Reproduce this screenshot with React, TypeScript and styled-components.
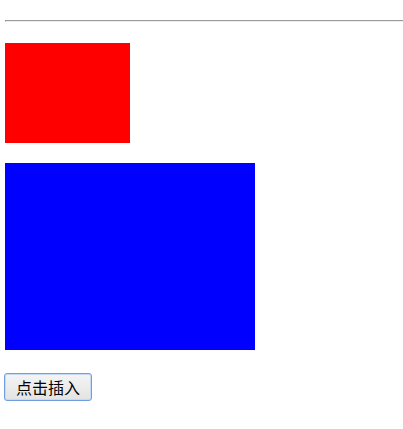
import React from 'react';
import styled, { createGlobalStyle } from 'styled-components';

const GlobalStyle = createGlobalStyle`
  html, body {
    margin: 0;
    padding: 0;
    background: #ffffff;
  }
  body {
    font-family: "Noto Sans CJK SC", "Liberation Sans", sans-serif;
  }
`;

const Page = styled.div`
  display: flex;
  flex-direction: column;
  align-items: flex-start;
  padding: 20px 0 0 5px;
`;

const Rule = styled.hr`
  align-self: stretch;
  margin: 0;
  height: 0;
  border-style: solid;
  border-width: 1px 0 1px 1px;
  border-top-color: #9a9a9a;
  border-left-color: #9a9a9a;
  border-bottom-color: #eeeeee;
`;

const Block = styled.div<{ $w: number; $h: number; $color: string; $top: number }>`
  width: ${({ $w }) => $w}px;
  height: ${({ $h }) => $h}px;
  background: ${({ $color }) => $color};
  margin-top: ${({ $top }) => $top}px;
`;

const InsertButton = styled.button`
  margin: 23px 0 0 -1px;
  height: 28px;
  padding: 0 11px 1px 11px;
  font-family: "Noto Sans CJK SC", "Liberation Sans", sans-serif;
  font-size: 16px;
  line-height: 1;
  color: #000000;
  background: linear-gradient(180deg, #f4f4f4 0%, #ececec 50%, #e3e3e3 100%);
  border: 1px solid #6f9fe0;
  border-radius: 3px;
  box-shadow: inset 0 0 0 1px #c4daf5;
  cursor: pointer;
`;

export default function App() {
  return (
    <>
      <GlobalStyle />
      <Page>
        <Rule />
        <Block $w={125} $h={100} $color="#ff0000" $top={21} />
        <Block $w={250} $h={187} $color="#0000ff" $top={20} />
        <InsertButton>点击插入</InsertButton>
      </Page>
    </>
  );
}
